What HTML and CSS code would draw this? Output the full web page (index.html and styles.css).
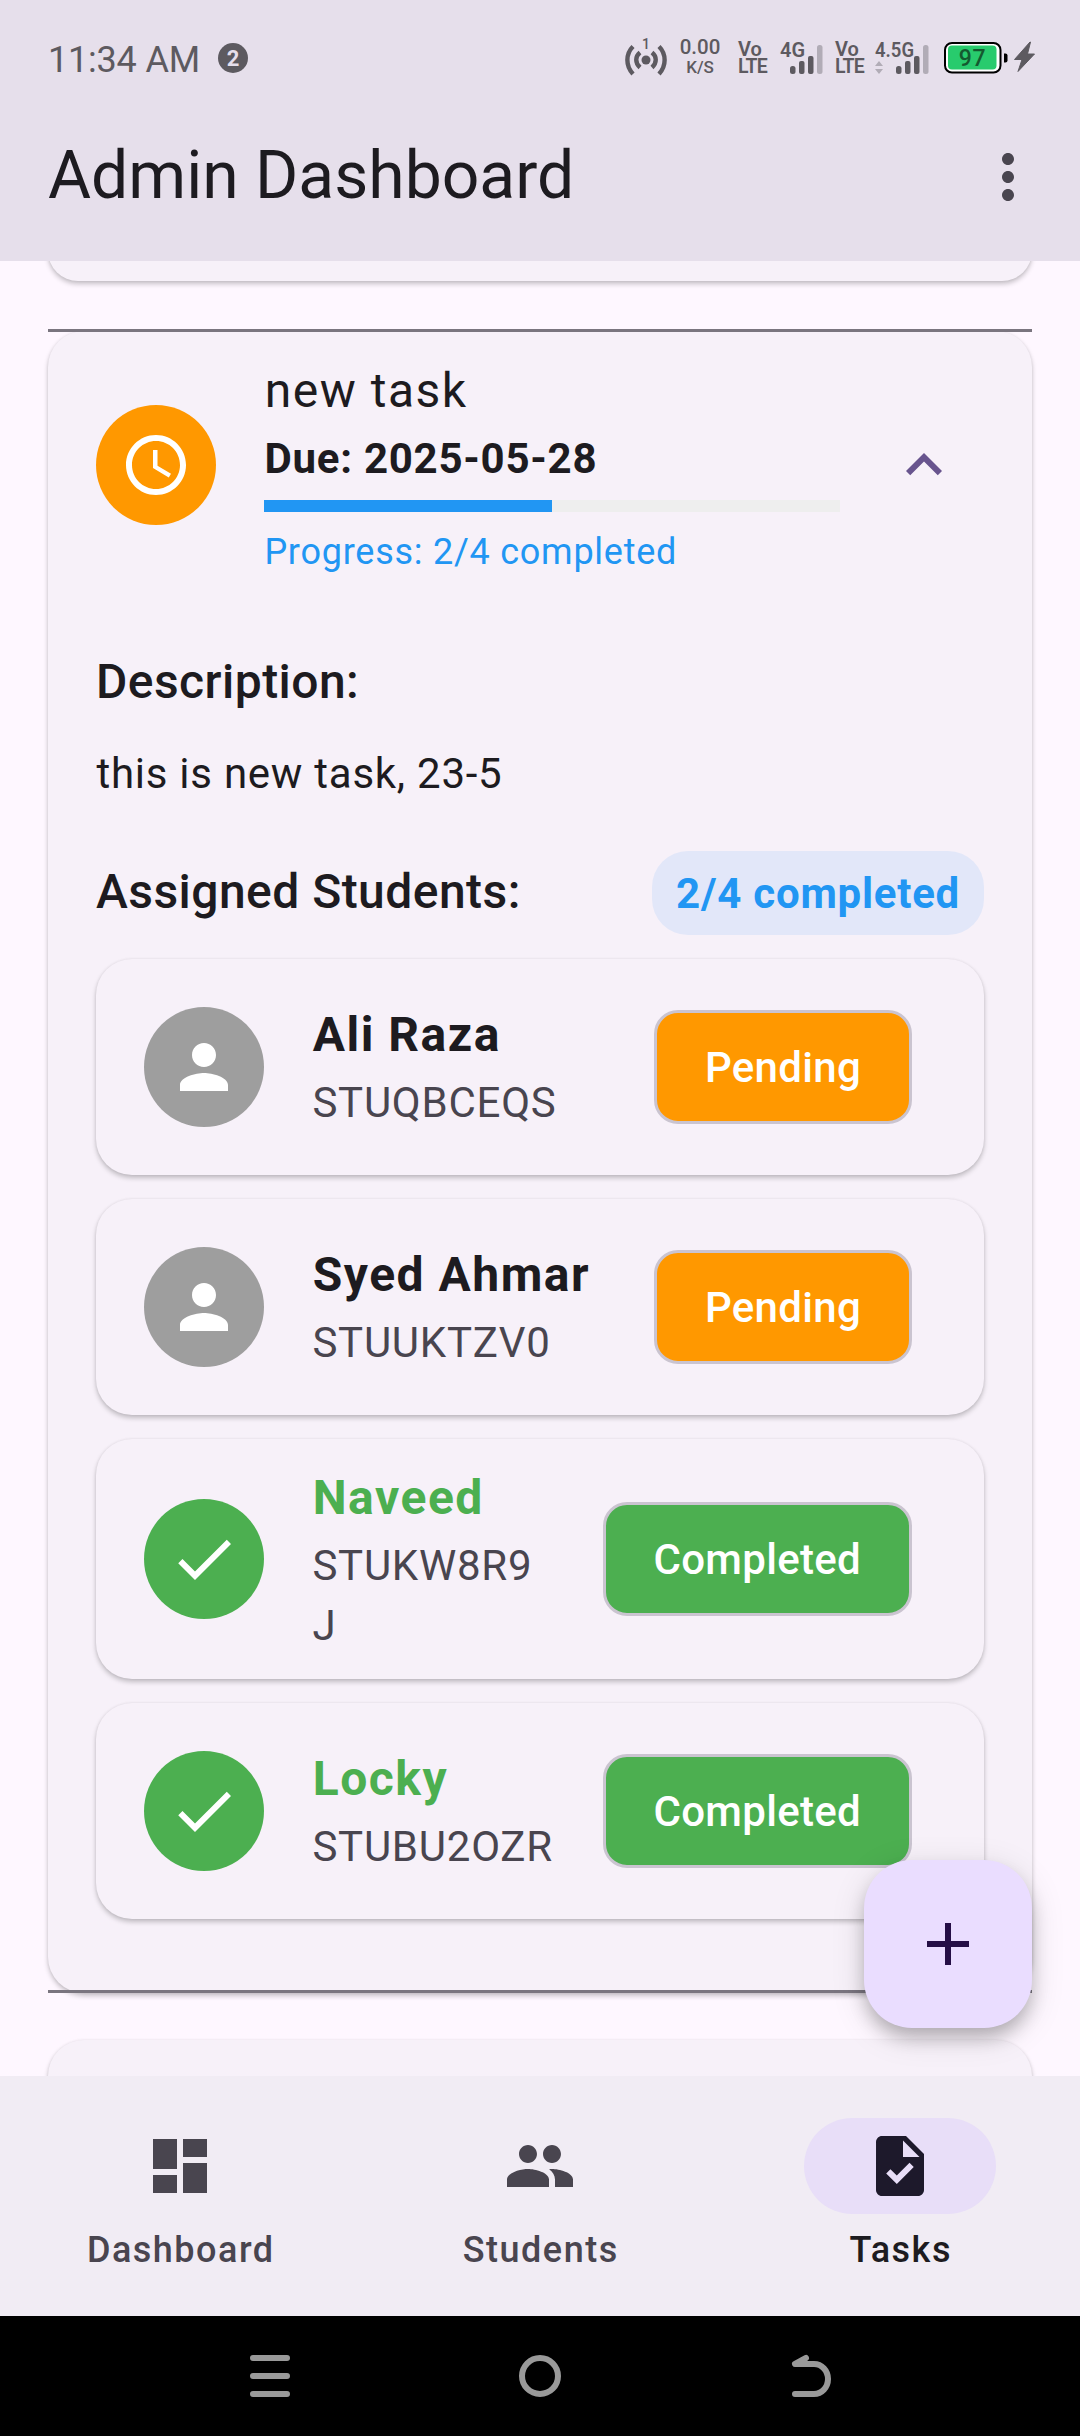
FILE: index.html
```html
<!DOCTYPE html>
<html lang="en">
<head>
<meta charset="utf-8">
<title>Admin Dashboard</title>
<link rel="stylesheet" href="styles.css">
</head>
<body>
<div class="screen">
  <header class="top">
    <div class="status">
      <span class="clock">11:34 AM</span>
      <span class="count">2</span>
      <svg class="hotspot" viewBox="0 0 42 38" width="42" height="38">
        <g fill="none" stroke="#5d5a60" stroke-width="4.4">
          <path d="M8 8.5C.5 16 .5 28 8 36"/><path d="M34 8.5c7.500 7.500 7.500 19.500 0 27.500"/>
          <path d="M15 14.500c-5 4-5 10.500 0 15"/><path d="M27 14.500c5 4 5 10.500 0 15"/>
        </g>
        <circle cx="21" cy="22" r="4.500" fill="#5d5a60"/>
        <text x="21" y="11" text-anchor="middle" class="hotspot-num">1</text>
      </svg>
      <span class="stack speed"><b>0.00</b><i>K/S</i></span>
      <span class="stack volte"><b>Vo</b><i>LTE</i></span>
      <svg class="signal sig-a" viewBox="0 0 44 34" width="44" height="34">
        <text x="0" y="16" class="net" textLength="25" lengthAdjust="spacingAndGlyphs">4G</text>
        <g fill="#5d5a60"><rect x="10" y="25" width="5.500" height="8" rx="2.500"/><rect x="19" y="20" width="5.500" height="13" rx="2"/><rect x="28" y="15" width="5.500" height="18" rx="2"/></g>
        <rect x="37" y="4" width="5.500" height="29" rx="2.500" fill="#b1acb6"/>
      </svg>
      <span class="stack volte volte-b"><b>Vo</b><i>LTE</i></span>
      <svg class="signal sig-b" viewBox="0 0 56 34" width="56" height="34">
        <text x="1" y="16" class="net" textLength="39" lengthAdjust="spacingAndGlyphs">4.5G</text>
        <path d="M1 25l4-5 4 5zM1 28h8l-4 5z" fill="#b1acb6"/>
        <g fill="#5d5a60"><rect x="22" y="25" width="5.500" height="8" rx="2.500"/><rect x="31" y="20" width="5.500" height="13" rx="2"/><rect x="40" y="15" width="5.500" height="18" rx="2"/></g>
        <rect x="49" y="4" width="5.500" height="29" rx="2.500" fill="#b1acb6"/>
      </svg>
      <svg class="battery" viewBox="0 0 92 34" width="92" height="34">
        <rect x="1" y="2" width="55.500" height="29.500" rx="7" fill="#fff" stroke="#000" stroke-width="2"/>
        <rect x="4" y="4.500" width="48.500" height="24" rx="4" fill="#28cb6d"/>
        <path d="M60 12.500h1.500q2 0 2 2v5q0 2-2 2H60z" fill="#000"/>
        <text x="28.500" y="24.500" text-anchor="middle" class="pct">97</text>
        <path d="M86 1 70.500 18.500H78L74 30.500 90.500 13H83.500L86.500 1z" fill="#5d5a60" stroke="#5d5a60" stroke-linejoin="round"/>
      </svg>
    </div>
    <div class="appbar">
      <h1>Admin Dashboard</h1>
      <svg class="more" viewBox="0 0 24 24" width="72" height="72"><path d="M12 8c1.100 0 2-.9 2-2s-.9-2-2-2-2 .9-2 2 .9 2 2 2zm0 2c-1.100 0-2 .9-2 2s.9 2 2 2 2-.9 2-2-.9-2-2-2zm0 6c-1.100 0-2 .9-2 2s.9 2 2 2 2-.9 2-2-.9-2-2-2z"/></svg>
    </div>
  </header>

  <main class="list">
    <section class="card card-prev"></section>
    <div class="task-wrap">
      <section class="card task">
        <div class="tile">
          <span class="avatar orange"><svg viewBox="0 0 24 24"><path d="M11.990 2C6.470 2 2 6.480 2 12s4.470 10 9.990 10C17.520 22 22 17.520 22 12S17.520 2 11.990 2zM12 20c-4.420 0-8-3.580-8-8s3.580-8 8-8 8 3.580 8 8-3.580 8-8 8zM12.500 7H11v6l5.250 3.150.75-1.230-4.500-2.670z"/></svg></span>
          <div class="tile-text">
            <div class="task-title">new task</div>
            <div class="due">Due: 2025-05-28</div>
            <div class="bar"><div class="bar-fill" style="width:50%"></div></div>
            <div class="progress">Progress: 2/4 completed</div>
          </div>
          <svg class="chevron" viewBox="0 0 24 24" width="72" height="72"><path d="M12 8l-6 6 1.410 1.410L12 10.830l4.590 4.580L18 14z"/></svg>
        </div>
        <h2>Description:</h2>
        <p class="desc">this is new task, 23-5</p>
        <div class="assigned"><h2>Assigned Students:</h2><span class="chip">2/4 completed</span></div>
        <div class="students">
          <article class="student">
            <span class="avatar grey"><svg viewBox="0 0 24 24"><path d="M12 12c2.210 0 4-1.790 4-4s-1.790-4-4-4-4 1.790-4 4 1.790 4 4 4zm0 2c-2.670 0-8 1.340-8 4v2h16v-2c0-2.660-5.330-4-8-4z"/></svg></span>
            <div class="who"><div class="name">Ali Raza</div><div class="id">STUQBCEQS</div></div>
            <span class="state pending">Pending</span>
          </article>
          <article class="student">
            <span class="avatar grey"><svg viewBox="0 0 24 24"><path d="M12 12c2.210 0 4-1.790 4-4s-1.790-4-4-4-4 1.790-4 4 1.790 4 4 4zm0 2c-2.670 0-8 1.340-8 4v2h16v-2c0-2.660-5.330-4-8-4z"/></svg></span>
            <div class="who"><div class="name">Syed Ahmar</div><div class="id">STUUKTZV0</div></div>
            <span class="state pending">Pending</span>
          </article>
          <article class="student tall">
            <span class="avatar green"><svg viewBox="0 0 24 24"><path d="M9 16.170 4.830 12l-1.420 1.410L9 19 21 7l-1.410-1.410z"/></svg></span>
            <div class="who"><div class="name done">Naveed</div><div class="id">STUKW8R9J</div></div>
            <span class="state complete">Completed</span>
          </article>
          <article class="student">
            <span class="avatar green"><svg viewBox="0 0 24 24"><path d="M9 16.170 4.830 12l-1.420 1.410L9 19 21 7l-1.410-1.410z"/></svg></span>
            <div class="who"><div class="name done">Locky</div><div class="id">STUBU2OZR</div></div>
            <span class="state complete">Completed</span>
          </article>
        </div>
      </section>
    </div>
    <section class="card card-next"></section>
    <button class="fab" aria-label="Add"><svg viewBox="0 0 24 24" width="72" height="72"><path d="M19 13h-6v6h-2v-6H5v-2h6V5h2v6h6z"/></svg></button>
  </main>

  <nav class="tabs">
    <div class="tab"><span class="pill"><svg viewBox="0 0 24 24" width="72" height="72"><path d="M3 13h8V3H3v10zm0 8h8v-6H3v6zm10 0h8V11h-8v10zm0-18v6h8V3h-8z"/></svg></span><span class="label">Dashboard</span></div>
    <div class="tab"><span class="pill"><svg viewBox="0 0 24 24" width="72" height="72"><path d="M16 11c1.660 0 2.990-1.340 2.990-3S17.660 5 16 5s-3 1.340-3 3 1.340 3 3 3zm-8 0c1.660 0 2.990-1.340 2.990-3S9.660 5 8 5 5 6.340 5 8s1.340 3 3 3zm0 2c-2.330 0-7 1.170-7 3.500V19h14v-2.500c0-2.330-4.670-3.500-7-3.500zm8 0c-.29 0-.62.020-.97.050 1.160.84 1.970 1.970 1.970 3.450V19h6v-2.500c0-2.330-4.670-3.500-7-3.500z"/></svg></span><span class="label">Students</span></div>
    <div class="tab active"><span class="pill"><svg viewBox="0 0 24 24" width="72" height="72"><path d="M14 2H6c-1.100 0-1.990.9-1.990 2L4 20c0 1.100.89 2 1.990 2H18c1.100 0 2-.9 2-2V8l-6-6zm-3.060 16L7.400 14.460l1.410-1.410 2.120 2.120 4.240-4.240 1.410 1.410L10.940 18zM13 9V3.500L18.500 9H13z"/></svg></span><span class="label">Tasks</span></div>
  </nav>

  <footer class="sysnav">
    <svg viewBox="0 0 48 48" width="48" height="48"><path d="M7 6h34M7 24h34M7 42h34"/></svg>
    <svg viewBox="0 0 48 48" width="48" height="48"><circle cx="24" cy="24" r="18"/></svg>
    <svg viewBox="0 0 48 48" width="48" height="48"><path d="M20 6 9 12h19a14 15 0 0 1 0 30H9" stroke-linejoin="round"/></svg>
  </footer>
</div>
</body>
</html>
```
FILE: styles.css
```css
* { box-sizing: border-box; }
body { margin: 0; font-family: Roboto, "Liberation Sans", sans-serif; color: #1d1b20; background: #fef7ff; }
h1, h2, p { margin: 0; }
.screen { width: 1080px; height: 2436px; display: flex; flex-direction: column; overflow: hidden; background: #fef7ff; }

.top { height: 261px; flex: none; background: #e6dfeb; position: relative; z-index: 2; }
.status { height: 93px; padding: 38px 46px 0 48px; display: flex; align-items: flex-start; color: #5d5a60; }
.status svg, .status span { flex: none; }
.status svg { overflow: visible; }
.clock { font-size: 36px; line-height: 44px; width: 152px; letter-spacing: -.2px; white-space: nowrap; }
.count { width: 30px; height: 30px; margin: 5px 0 0 18px; border-radius: 50%; background: #5d5a60; color: #e6dfeb; font-size: 22px; font-weight: 700; line-height: 31px; text-align: center; }
.hotspot { margin-left: 377px; }
.hotspot-num { font: 500 14px Roboto, sans-serif; fill: #5d5a60; }
.stack { display: flex; flex-direction: column; align-items: center; }
.stack b, .stack i { font-weight: 600; font-style: normal; display: block; }
.speed { width: 40px; margin: 0 0 0 13px; font-size: 20.5px; }
.stack.speed b, .stack.speed i { font-weight: 500; }
.speed b { line-height: 19px; }
.speed i { font-size: 17px; line-height: 20px; }
.volte { align-items: flex-start; width: 30px; margin: 2px 0 0 18px; font-size: 20px; line-height: 18px; }
.volte i { font-size: 19.5px; letter-spacing: -.7px; }
.volte-b { margin-left: 11px; }
.sig-a { margin: 3px 0 0 12px; }
.sig-b { margin: 3px 0 0 9px; }
.net { font: 600 21px Roboto, sans-serif; fill: #5d5a60; }
.battery { margin: 3px 0 0 14px; }
.pct { font: 500 23px Roboto, sans-serif; letter-spacing: .6px; fill: #14592f; }
.appbar { height: 168px; padding: 0 36px 0 48px; display: flex; align-items: center; justify-content: space-between; }
h1 { font-size: 66px; font-weight: 400; line-height: 84px; margin-top: -3px; }
.more { fill: #49454f; }

.list { flex: 1; min-height: 0; padding: 0 48px; position: relative; z-index: 0; display: flex; flex-direction: column; }
.card, .student { background: #f7f1f9; border-radius: 36px; box-shadow: 0 3px 5px rgba(0,0,0,.22), 0 0 3px rgba(0,0,0,.07); }
.card { flex: none; }
.card-prev { height: 60px; margin-top: -40px; }
.task-wrap { flex: none; margin: 48px 0 47px; height: 1664px; border-top: 3px solid #7a757f; border-bottom: 3px solid #7a757f; }
.task { height: 1662px; margin-top: -1px; padding: 0 48px; position: relative; z-index: -1; }
.card-next { height: 120px; }

.tile { height: 268px; display: flex; align-items: center; }
.avatar { width: 120px; height: 120px; flex: none; border-radius: 50%; display: grid; place-items: center; }
.avatar svg { width: 72px; height: 72px; fill: #fff; }
.orange { background: #ff9800; }
.grey { background: #9e9e9e; }
.green { background: #4caf50; }
.tile-text { width: 576px; margin-left: 48px; padding-top: 4px; }
.task-title { margin: -3px 0 2px; font-size: 48px; line-height: 72px; letter-spacing: 1.5px; text-indent: .75px; }
.due { font-size: 42px; font-weight: 700; line-height: 60px; letter-spacing: .75px; text-indent: .4px; }
.bar { height: 12px; margin: 11px 0 16px; background: #eee; }
.bar-fill { height: 100%; background: #2196f3; }
.progress { font-size: 36px; line-height: 48px; letter-spacing: .75px; text-indent: .4px; color: #2196f3; }
.chevron { margin-left: 48px; fill: #68548e; }
h2 { font-size: 48px; font-weight: 500; line-height: 72px; letter-spacing: .45px; }
.tile + h2 { margin-top: 47px; }
.desc { margin-top: 26px; font-size: 42px; line-height: 60px; letter-spacing: .75px; text-indent: .4px; }
.assigned { margin-top: 47px; height: 84px; display: flex; align-items: center; justify-content: space-between; }
.assigned h2 { margin-top: -3px; }
.chip { height: 84px; padding: 13px 24px 11px; border-radius: 36px; background: #e2e7f9; color: #2196f3; font-size: 42px; font-weight: 700; line-height: 60px; letter-spacing: .75px; text-indent: .4px; white-space: nowrap; }

.students { margin-top: 24px; display: flex; flex-direction: column; gap: 24px; }
.student { height: 216px; padding: 0 72px 0 48px; display: flex; align-items: center; }
.student.tall { height: 240px; }
.who { flex: 1; min-width: 0; margin: 0 48px; overflow-wrap: anywhere; }
.tall .who { padding-top: 2px; }
.name { margin: -2px 0 2px; font-size: 48px; font-weight: 700; line-height: 72px; letter-spacing: 1.5px; text-indent: .75px; white-space: nowrap; }
.done { color: #4caf50; }
.id { font-size: 42px; line-height: 60px; letter-spacing: .75px; padding-left: .4px; color: #49454f; }
.state { flex: none; height: 114px; padding: 0 48px; border: 3px solid #cac4d0; border-radius: 24px; color: #fff; font-size: 42px; font-weight: 500; line-height: 110px; letter-spacing: .3px; }
.pending { background: #ff9800; }
.complete { background: #4caf50; }

.fab { position: absolute; right: 48px; bottom: 48px; width: 168px; height: 168px; padding: 0; border: 0; border-radius: 48px; background: #eaddff; display: grid; place-items: center; box-shadow: 0 11px 18px -2px rgba(0,0,0,.24), 0 8px 34px rgba(0,0,0,.13); }
.fab svg { fill: #250e46; }

.tabs { flex: none; height: 240px; background: #f1ecf4; display: flex; position: relative; z-index: 2; color: #49454f; }
.tab { flex: 1; padding-top: 42px; display: flex; flex-direction: column; align-items: center; }
.pill { width: 192px; height: 96px; border-radius: 48px; display: grid; place-items: center; }
.pill svg { fill: #49454f; }
.label { margin-top: 12px; font-size: 36px; font-weight: 500; line-height: 48px; letter-spacing: 1.5px; text-indent: 1.5px; }
.active .pill { background: #e8def8; }
.active .pill svg { fill: #1d192b; }
.active .label { color: #1d1b20; }
.sysnav { flex: none; height: 120px; padding: 0 246px; background: #000; display: flex; align-items: center; justify-content: space-between; }
.sysnav svg { fill: none; stroke: #999; stroke-width: 6; stroke-linecap: round; }
```
